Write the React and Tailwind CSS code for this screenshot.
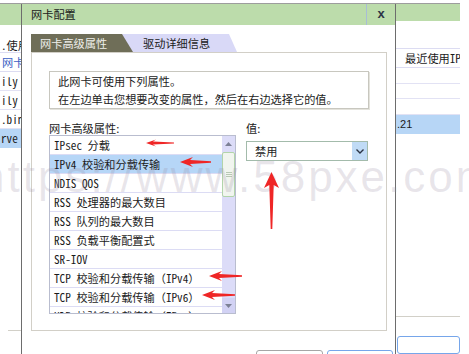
import React from "react";

const items = [
  "IPsec 分载",
  "IPv4 校验和分载传输",
  "NDIS QOS",
  "RSS 处理器的最大数目",
  "RSS 队列的最大数目",
  "RSS 负载平衡配置式",
  "SR-IOV",
  "TCP 校验和分载传输（IPv4）",
  "TCP 校验和分载传输（IPv6）",
  "UDP 校验和分载传输（IPv4）",
];

const mono = "[font-family:'Noto_Sans_Mono_CJK_SC','Liberation_Mono','Noto_Sans_CJK_SC',monospace]";

// left-pointing annotation arrow
const leftArrow = (tx, y, ex, h, l, t1, t2) =>
  [
    [tx, y],
    [tx + l, y - h],
    [tx + l - 3, y - t1],
    [ex, y - t2],
    [ex, y + t2],
    [tx + l - 3, y + t1],
    [tx + l, y + h],
  ]
    .map((p) => p.join(","))
    .join(" ");

const upArrow = (x, ty, ey, w, l, t1, t2) =>
  [
    [x, ty],
    [x + w, ty + l],
    [x + t1, ty + l - 3],
    [x + t2, ey],
    [x - t2, ey],
    [x - t1, ty + l - 3],
    [x - w, ty + l],
  ]
    .map((p) => p.join(","))
    .join(" ");

const Arrows = () => (
  <svg className="absolute left-0 top-0 pointer-events-none" width="469" height="354">
    <g fill="#ef2626">
      <polygon points={leftArrow(146, 143, 174, 3.5, 10, 1.4, 0.6)} />
      <polygon points={leftArrow(180, 162, 211, 5, 13, 2, 0.7)} />
      <polygon points={leftArrow(209, 276, 242, 5, 13, 2, 0.7)} />
      <polygon points={leftArrow(202, 295, 235, 5, 13, 2, 0.7)} />
      <polygon points={upArrow(271.5, 172, 229, 7.5, 16, 2.2, 0.8)} />
    </g>
  </svg>
);

const LeftBg = () => (
  <div className={`w-[21px] shrink-0 flex flex-col overflow-hidden whitespace-nowrap ${mono}`}>
    <div className="h-[21px] bg-[#bcdcab]" />
    <div className="mt-[13px] h-[14px] leading-[14px] pl-[1px]">.使用</div>
    <div className="h-[20px] border-y border-[#dcdcf2] leading-[18px] pl-[2px] text-[#3b5fc4]">网卡</div>
    <div className="h-[19px] border-b border-[#e2e2f4] leading-[18px] pl-[1px]">ily</div>
    <div className="h-[19px] border-b border-[#e2e2f4] leading-[18px] pl-[1px]">ily</div>
    <div className="h-[19px] border-b border-[#e2e2f4] leading-[18px] pl-[1px]">.bin</div>
    <div className="h-[19px] bg-[#b7d6f6] leading-[18px] pl-[1px]">rve</div>
    <div className="mt-[182px] ml-[8px] border-t border-[#d2d0c8]" />
  </div>
);

const RightBg = () => (
  <div className="w-[64px] shrink-0 flex flex-col overflow-hidden whitespace-nowrap">
    <div className="h-[21px] bg-[#bcdcab]" />
    <div className={`mt-[27px] h-[20px] border-y border-[#dcdcf2] leading-[18px] pl-[9px] ${mono}`}>最近使用IP地址</div>
    <div className="h-[19px] border-b border-[#e2e2f4]" />
    <div className="h-[19px] border-b border-[#e2e2f4]" />
    <div className="h-[19px] border-b border-[#e2e2f4]" />
    <div className="h-[19px] bg-[#b7d6f6] leading-[19px] pl-[1px] [font-family:'Liberation_Sans',sans-serif] text-[11px]">.21</div>
    <div className="mt-[182px] border-t border-[#d2d0c8]" />
    <div className="mt-[19px] ml-[1px] w-[63px] h-[22px] border border-[#76a6ea] rounded-[3px]" />
  </div>
);

const Scrollbar = () => (
  <div className="w-[13px] h-full flex flex-col bg-[#dcdcf8]">
    <div className="h-[15px] flex items-center justify-center">
      <svg width="7" height="4" viewBox="0 0 7 4">
        <polygon points="3.5,0 7,4 0,4" fill="#7d8196" />
      </svg>
    </div>
    <div className="mt-[1px] h-[45px] bg-[#f1f5ef] border border-[#b2d4aa] rounded-[2px] flex flex-col items-center justify-center gap-[1px]">
      <div className="w-[6px] h-px bg-[#b8c8b4]" />
      <div className="w-[6px] h-px bg-[#b8c8b4]" />
      <div className="w-[6px] h-px bg-[#b8c8b4]" />
    </div>
    <div className="flex-1" />
    <div className="h-[15px] bg-[#d2d2f4] flex items-center justify-center">
      <svg width="7" height="4" viewBox="0 0 7 4">
        <polygon points="0,0 7,0 3.5,4" fill="#7d8196" />
      </svg>
    </div>
  </div>
);

const Dialog = () => (
  <div className="w-[375px] shrink-0 border-x border-[#6d6d6d] flex flex-col">
    <div className="h-[21px] bg-[#bcdcab] flex">
      <div className="flex-1 pl-[9px] leading-[21px]">网卡配置</div>
      <div className="w-px bg-[#a8bdd6]" />
      <div className="w-[28px] text-center leading-[20px] text-[13px] font-bold text-[#2c3446] [font-family:'Liberation_Sans',sans-serif]">x</div>
    </div>

    <div className="pl-[9px] pr-[8px] pt-[9px] flex flex-col">
      <div className="h-[18px] flex">
        <div className="relative z-10 w-[102px] h-full bg-[#6f6e58] text-[#eeeeea] pl-[9px] leading-[18px] [clip-path:polygon(0_0,calc(100%-11px)_0,100%_100%,0_100%)]">
          网卡高级属性
        </div>
        <div className="ml-[-11px] w-[115px] h-full bg-[#d9d9f7] pl-[21px] leading-[18px] [clip-path:polygon(0_0,calc(100%-8px)_0,100%_100%,0_100%)]">
          驱动详细信息
        </div>
      </div>

      <div className="h-[279px] border border-[#d2cfc7] px-[17px] pt-[18px] flex flex-col">
        <div className="h-[38px] border border-[#c8c7bf] shadow-[1px_1px_0_#e4e3dc] pl-[8px] leading-[18px]">
          <div>此网卡可使用下列属性。</div>
          <div>在左边单击您想要改变的属性，然后在右边选择它的值。</div>
        </div>

        <div className="mt-[12px] flex">
          <div className="w-[187px] flex flex-col">
            <div className="h-[14px] leading-[14px]">网卡高级属性:</div>
            <div className="h-[179px] border border-[#b9bdcf] flex overflow-hidden">
              <div className={`flex-1 overflow-hidden whitespace-nowrap ${mono}`}>
                {items.map((it, i) => (
                  <div
                    key={it}
                    className={`h-[19px] shrink-0 border-b border-[#dcdcf4] pl-[4px] leading-[18px] ${
                      i === 1 ? "bg-[#b6d6f7]" : ""
                    }`}
                  >
                    {it}
                  </div>
                ))}
              </div>
              <Scrollbar />
            </div>
          </div>

          <div className="ml-[10px] w-[122px] flex flex-col">
            <div className="h-[14px] leading-[14px]">值:</div>
            <div className="mt-[6px] h-[20px] border border-[#a3bbab] flex">
              <div className="flex-1 pl-[8px] leading-[18px]">禁用</div>
              <div className="w-[15px] bg-[#c0dbf6] flex items-center justify-center">
                <svg width="8" height="5" viewBox="0 0 8 5">
                  <polyline points="0.5,0.5 4,4 7.5,0.5" fill="none" stroke="#2b3445" strokeWidth="1.4" />
                </svg>
              </div>
            </div>
          </div>
        </div>
      </div>
    </div>

    <div className="mt-[19px] flex justify-end gap-[4px] pr-[2px]">
      <div className="w-[67px] h-[22px] border border-[#a6a6a6] rounded-[3px] pt-[1px] leading-[14px] text-center">确定</div>
      <div className="w-[66px] h-[22px] border border-[#76a6ea] rounded-[3px] pt-[1px] leading-[14px] text-center">取消</div>
    </div>
  </div>
);

const Watermark = () => (
  <div className="absolute left-[-20px] top-[155px] pointer-events-none whitespace-nowrap text-[44px] leading-[44px] tracking-[3px] text-[rgba(150,138,160,0.22)] [font-family:'Liberation_Sans',sans-serif]">
    https://www.58pxe.com
  </div>
);

export default function App() {
  return (
    <div className="relative w-[469px] h-[354px] overflow-hidden bg-white text-[#1b1b1b] text-[11.2px] [font-family:'Noto_Sans_CJK_SC',sans-serif]">
      <div className="h-[3px]" />
      <div className="flex w-[460px] h-[351px] border-t border-[#9d9d9d]">
        <LeftBg />
        <Dialog />
        <RightBg />
      </div>
      <Watermark />
      <Arrows />
    </div>
  );
}
